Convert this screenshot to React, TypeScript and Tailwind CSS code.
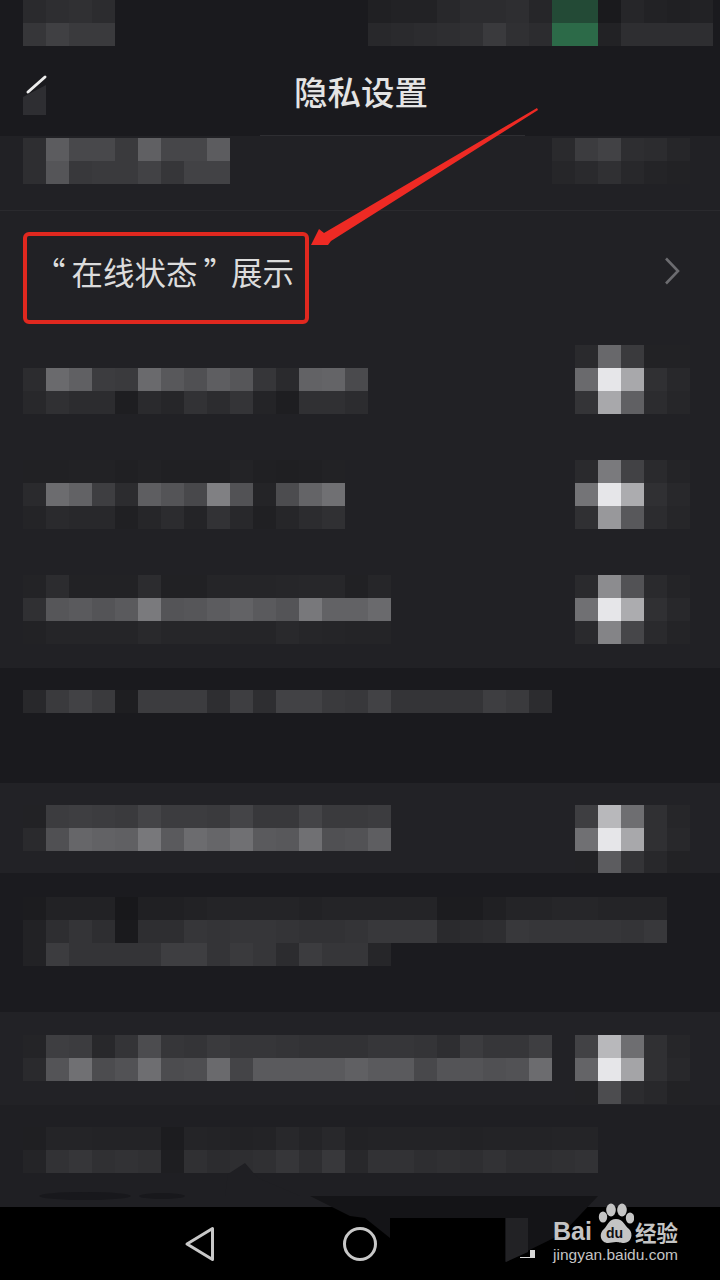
const colorOf = (cell: string) => {
  if (cell === 'g1') return '#234a36';
  if (cell === 'g2') return '#2c6a48';
  if (cell === '__') return 'transparent';
  const v = parseInt(cell, 16);
  return `rgb(${v},${v},${Math.min(v + 3, 255)})`;
};

// pixelated blocks, each cell is 23x23 like the blur in the screenshot
function Mosaic({ rows, className }: { rows: string[]; className?: string }) {
  return (
    <div className={className}>
      {rows.map((row, i) => (
        <div key={i} className="flex h-[23px]">
          {row.split(' ').map((cell, j) => (
            <div key={j} className="w-[23px] h-[23px]" style={{ backgroundColor: colorOf(cell) }} />
          ))}
        </div>
      ))}
    </div>
  );
}

function SettingRow({ left, toggle, height, pad, bg }: { left: string[]; toggle: string[]; height: string; pad: string; bg: string }) {
  return (
    <div className={`flex justify-between pl-[23px] pr-[30px] ${height} ${pad} ${bg}`}>
      <Mosaic rows={left} />
      <Mosaic rows={toggle} />
    </div>
  );
}

export default function App() {
  return (
    <div
      lang="zh-CN"
      className="relative w-[720px] h-[1280px] overflow-hidden flex flex-col bg-[#1a1a1e] font-['Noto_Sans_CJK_SC','Liberation_Sans',sans-serif]"
    >
      {/* status bar */}
      <div className="flex h-[46px] pl-[23px] shrink-0">
        <Mosaic rows={['2a 2e 30 2c', '36 40 3a 3a']} />
        <Mosaic
          className="ml-[253px]"
          rows={[
            '20 22 22 28 2c 2c 2e 26 g1 g1 1a 26 22 20 22',
            '28 2a 2c 2e 30 3a 30 2c g2 g2 22 2e 2e 2e 2e',
          ]}
        />
      </div>

      {/* header */}
      <div className="relative flex items-center justify-center h-[90px] shrink-0">
        <svg className="absolute left-[23px] top-[28px]" width="26" height="44" viewBox="0 0 26 44">
          <path d="M0 23 L23 11 V41 H0 Z" fill="#2e2e32" />
          <path d="M5 18 L22 3" stroke="#ececec" strokeWidth="3" strokeLinecap="round" fill="none" />
        </svg>
        <h1 className="text-[33.5px] leading-none font-medium text-[#e4e4e4] ml-[2px]">隐私设置</h1>
        <div className="absolute left-[260px] bottom-0 w-[265px] h-px bg-[#2e2e32]" />
      </div>

      {/* first blurred row */}
      <div className="flex justify-between pl-[23px] pr-[30px] h-[75px] pt-[2px] bg-[#212125] border-b border-[#2a2a2e] shrink-0">
        <Mosaic rows={['2e 5c 48 48 3a 60 46 46 5c', '2e 55 38 3a 3a 42 36 42 42']} />
        <Mosaic rows={['2a 3c 42 2e 2c 26', '26 2a 30 28 24 22']} />
      </div>

      <div className="flex items-start justify-between h-[123px] shrink-0 bg-[#212125] pl-[34px] pr-[40px] pt-[37px]">
        <span className="text-[31.5px] leading-[46px] text-[#dcdcdc] whitespace-nowrap">
          <span className="mr-[6px]">“</span>在线状态<span className="ml-[6px] tracking-[-4px]">”</span>展示
        </span>
        <svg className="mt-[9px]" width="16" height="28" viewBox="0 0 16 28">
          <path d="M2 1.5 L14 14 L2 26.5" stroke="#6c6c70" strokeWidth="2.6" fill="none" />
        </svg>
      </div>

      <SettingRow
        height="h-[115px]"
        pad="pt-[11px]"
        bg="bg-[#212125]"
        left={[
          '__',
          '2c 6a 60 3c 3a 6a 58 50 5e 56 36 2a 62 64 4a',
          '28 30 2c 2c 1e 2a 26 32 2c 34 24 1e 30 30 2c',
        ]}
        toggle={['2a 68 3a 22 22', '6a e6 a8 30 28', '34 a8 60 2c 26']}
      />
      <SettingRow
        height="h-[115px]"
        pad="pt-[11px]"
        bg="bg-[#212125]"
        left={[
          '21 21 22 22 20 22 20 20 20 23 20 1f 20 22',
          '2a 6c 62 3e 2c 5e 54 48 80 52 24 4c 64 70',
          '24 2a 28 28 20 26 2c 24 32 28 20 26 2c 30',
        ]}
        toggle={['2a 7a 42 2a 24', '74 e6 ac 30 28', '30 98 58 2c 26']}
      />
      <SettingRow
        height="h-[104px]"
        pad="pt-[11px]"
        bg="bg-[#212125]"
        left={[
          '23 2c 22 22 22 2c 21 21 25 25 25 26 27 27 21 26',
          '30 56 5a 54 5a 7a 54 56 5c 62 5a 54 78 62 62 6a',
          '22 25 25 25 25 29 26 26 26 25 25 29 26 25 24 24',
        ]}
        toggle={['2a 8c 52 2a 24', '70 e6 ac 30 28', '2a 84 46 2a 24']}
      />

      {/* note under the group */}
      <div className="h-[115px] shrink-0 pl-[23px] pt-[22px] bg-[#1a1a1e]">
        <Mosaic rows={['28 3a 42 3a 1e 3c 3c 3c 2e 3e 2e 42 42 3a 38 42 34 34 34 34 3e 3a 2c']} />
      </div>

      <SettingRow
        height="h-[90px]"
        pad="pt-[22px]"
        bg="bg-[#222226]"
        left={[
          '22 3c 3e 3c 3a 44 3c 3c 3a 44 38 38 44 3a 3a 3c',
          '2a 50 66 62 60 78 5a 6c 66 70 5a 58 70 50 52 5e',
        ]}
        toggle={['3e b8 6e 30 26', '70 e6 a8 30 28', '22 5c 34 28 22']}
      />

      <div className="h-[139px] shrink-0 pl-[23px] pt-[24px] bg-[#1b1b1f]">
        <Mosaic
          rows={[
            '1c 22 22 22 18 20 20 22 24 24 24 24 22 24 24 24 24 24 1c 1c 20 24 24 26 26 24 24 24',
            '22 2e 34 2e 1a 2e 2e 36 34 36 36 34 32 32 34 38 38 38 2a 2c 2e 38 36 36 36 36 34 38',
            '22 3c 34 34 34 34 3e 3e 34 3a 36 2c 3c 36 36 26',
          ]}
        />
      </div>

      <SettingRow
        height="h-[93px]"
        pad="pt-[23px]"
        bg="bg-[#222226]"
        left={[
          '24 3e 3c 28 34 4c 36 34 3a 36 36 34 32 32 32 36 36 34 2e 3c 36 36 3e',
          '2a 54 70 4c 52 6e 4c 4e 6a 44 5a 5a 5a 5a 60 5a 5a 48 54 54 50 52 6c',
        ]}
        toggle={['42 b8 6e 30 26', '64 e6 a4 30 28', '22 4c 2c 28 22']}
      />

      <div className="h-[102px] shrink-0 pl-[23px] pt-[22px] bg-[#1f1f23]">
        <Mosaic
          rows={[
            '1f 24 24 23 23 23 1c 24 23 22 23 28 24 28 22 23 23 23 23 22 23 23 23 24 24',
            '24 32 36 30 32 30 1e 30 2c 2e 30 36 2e 38 28 32 32 2e 30 2e 32 2e 2e 30 32',
          ]}
        />
      </div>

      {/* android nav bar */}
      <div className="flex-1 bg-black" />

      {/* smudges left over from the blur, sitting across the nav bar */}
      <svg className="absolute left-0 top-[1160px]" width="720" height="120" viewBox="0 0 720 120">
        <path d="M228 14 L245 3 L258 18 L300 36 H225 Z" fill="#1f1f23" />
        <ellipse cx="85" cy="36" rx="46" ry="4" fill="#18181c" />
        <ellipse cx="162" cy="36" rx="23" ry="3" fill="#18181c" />
        <path d="M310 36 H598 L562 74 L505 102 V58 H390 V78 L365 58 L350 56 Z" fill="#141417" />
        <path d="M506 58 H528 V92 L506 102 Z" fill="#222225" />
        <path d="M520 97 L530 97 L530 90 H535 V98 H520 Z" fill="#d8d8d8" />
      </svg>

      <svg className="absolute left-[180px] top-[1222px]" width="200" height="44" viewBox="0 0 200 44">
        <path d="M7 22 L32.5 6.5 V37.5 Z" stroke="#c8c8c8" strokeWidth="3" strokeLinejoin="round" fill="none" />
        <circle cx="180" cy="22" r="15.5" stroke="#c8c8c8" strokeWidth="3" fill="none" />
      </svg>

      {/* annotation */}
      <div className="absolute left-[23px] top-[232px] w-[286px] h-[92px] border-[4px] border-[#e0281f] rounded-[6px]" />
      <svg className="absolute left-[300px] top-[100px]" width="250" height="155" viewBox="0 0 250 155">
        <path d="M237 8 L238 10 L31 141 L28 145 L11 145 L19 129 L24 133 Z" fill="#ee2a24" />
      </svg>

      {/* baidu watermark */}
      <div className="absolute left-[553px] top-[1203px] w-[130px] h-[62px] text-[#c4c4c4]">
        <svg className="absolute left-[45px] top-0" width="36" height="41" viewBox="0 0 36 41">
          <ellipse cx="5" cy="14" rx="4.2" ry="5.5" fill="#c4c4c4" />
          <ellipse cx="13" cy="7" rx="4.8" ry="6.5" fill="#c4c4c4" />
          <ellipse cx="24" cy="7" rx="4.8" ry="6.5" fill="#c4c4c4" />
          <ellipse cx="32" cy="15" rx="4.2" ry="5.5" fill="#c4c4c4" />
          <path d="M18 16 C25 16 26 22 31 26 C36 31 33 40 26 40 C22 40 21 39 18 39 C15 39 13 40 10 40 C3 40 0 31 6 26 C10 22 11 16 18 16 Z" fill="#c4c4c4" />
        </svg>
        <span className="absolute left-[53px] top-[22px] font-['Liberation_Sans',sans-serif] font-bold text-[14px] leading-[16px] text-[#101012]">du</span>
        <span className="absolute left-0 top-[13px] font-['Liberation_Sans',sans-serif] font-bold text-[25px] leading-[30px]">Bai</span>
        <span className="absolute left-[82px] top-[16px] font-bold text-[21.5px] leading-[26px] whitespace-nowrap">经验</span>
        <span className="absolute left-0 top-[42px] font-['Liberation_Sans',sans-serif] text-[15.5px] leading-[20px] whitespace-nowrap">jingyan.baidu.com</span>
      </div>
    </div>
  );
}
